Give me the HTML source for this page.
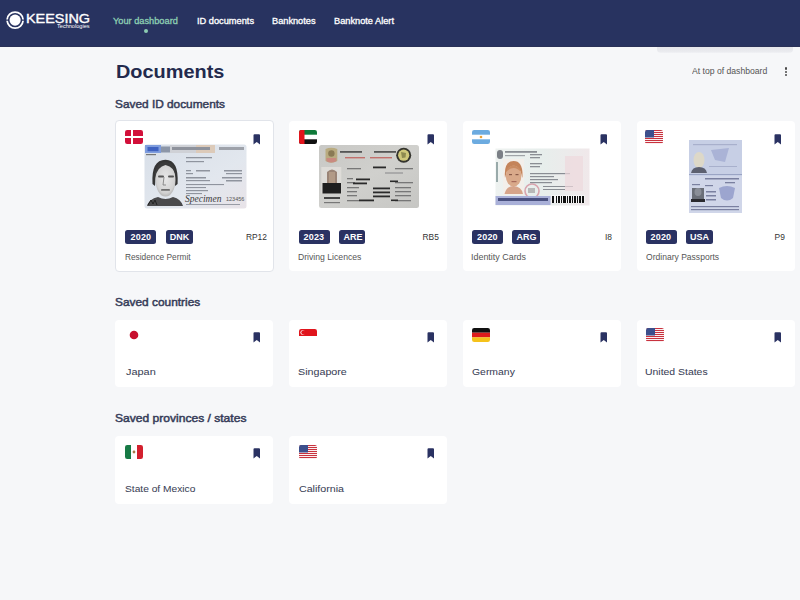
<!DOCTYPE html>
<html><head><meta charset="utf-8"><style>
html,body{margin:0;padding:0;}
body{width:800px;height:600px;overflow:hidden;background:#f6f7f9;position:relative;font-family:"Liberation Sans",sans-serif;}
.t{position:absolute;white-space:nowrap;font-family:"Liberation Sans",sans-serif;}
.a{position:absolute;display:block;}
.hdr{position:absolute;left:0;top:0;width:800px;height:46px;background:#283360;border-bottom:1px solid #2a3157;}
.strip{position:absolute;left:657px;top:47px;width:136px;height:6px;background:linear-gradient(#e6e7ec,#e9eaee 70%,#f1f2f5);border-radius:0 0 4px 4px;}
.card{position:absolute;background:#fff;border-radius:4px;}
.badge{position:absolute;top:230px;height:14px;background:#2a3262;border-radius:2.5px;}
.dot{position:absolute;width:2.2px;height:2.2px;border-radius:50%;background:#4a4a4a;}
</style></head><body>
<div class="hdr"></div>
<div class="strip"></div>
<svg class="a" style="left:5px;top:10px" width="21" height="21" viewBox="0 0 21 21">
<path d="M1.228 9.400 A8.9 8.9 0 0 1 18.972 9.400 L17.216 9.400 A7.15 7.15 0 0 0 2.984 9.400 Z" fill="#fff"/>
<path d="M1.228 10.800 A8.9 8.9 0 0 0 18.972 10.800 L17.216 10.800 A7.15 7.15 0 0 1 2.984 10.800 Z" fill="#fff"/>
<circle cx="10.1" cy="10.1" r="5.6" fill="#fff"/>
</svg>
<div class="a" style="left:144px;top:28.5px;width:4px;height:4px;border-radius:50%;background:#8ccdb2"></div>
<div class="dot" style="left:785px;top:67.4px"></div>
<div class="dot" style="left:785px;top:70.8px"></div>
<div class="dot" style="left:785px;top:74.1px"></div>
<div class="card" style="left:115px;top:120px;width:159px;height:152px;border:1px solid #e1e4ea;box-sizing:border-box"></div><div class="card" style="left:289px;top:121px;width:158px;height:150px"></div><div class="card" style="left:463px;top:121px;width:158px;height:150px"></div><div class="card" style="left:637px;top:121px;width:158px;height:150px"></div><div class="card" style="left:115px;top:320px;width:158px;height:67px"></div><div class="card" style="left:289px;top:320px;width:158px;height:67px"></div><div class="card" style="left:463px;top:320px;width:158px;height:67px"></div><div class="card" style="left:637px;top:320px;width:158px;height:67px"></div><div class="card" style="left:115px;top:436px;width:158px;height:68px"></div><div class="card" style="left:289px;top:436px;width:158px;height:68px"></div>
<div class="badge" style="left:125px;width:31px"></div><div class="badge" style="left:166px;width:27px"></div><div class="badge" style="left:299px;width:31px"></div><div class="badge" style="left:339px;width:26px"></div><div class="badge" style="left:472px;width:31px"></div><div class="badge" style="left:512px;width:28px"></div><div class="badge" style="left:645.5px;width:31px"></div><div class="badge" style="left:686px;width:27px"></div>
<svg class="a" style="left:125px;top:130px" width="18" height="14" viewBox="0 0 18 14"><defs><clipPath id="c125130"><rect width="18" height="14" rx="2.2"/></clipPath></defs><g clip-path="url(#c125130)"><rect width="18" height="14" fill="#d2103a"/><rect x="6" width="2" height="14" fill="#fff"/><rect y="6" width="18" height="2" fill="#fff"/></g></svg><svg class="a" style="left:298.5px;top:130px" width="18" height="14" viewBox="0 0 18 14"><defs><clipPath id="c298.5130"><rect width="18" height="14" rx="2.2"/></clipPath></defs><g clip-path="url(#c298.5130)"><rect width="18" height="14" fill="#fff"/><rect width="18" height="4.7" fill="#0f7a3a"/><rect y="9.3" width="18" height="4.7" fill="#111"/><rect width="5.5" height="14" fill="#e3141c"/></g></svg><svg class="a" style="left:471.5px;top:130px" width="18" height="14" viewBox="0 0 18 14"><defs><clipPath id="c471.5130"><rect width="18" height="14" rx="2.2"/></clipPath></defs><g clip-path="url(#c471.5130)"><rect width="18" height="14" fill="#fff"/><rect width="18" height="4.7" fill="#6cabe0"/><rect y="9.3" width="18" height="4.7" fill="#6cabe0"/><circle cx="9" cy="7" r="1.3" fill="#e8a33a"/></g></svg><svg class="a" style="left:645px;top:130px" width="18" height="14" viewBox="0 0 18 14"><defs><clipPath id="c645130"><rect width="18" height="14" rx="2.2"/></clipPath></defs><g clip-path="url(#c645130)"><rect width="18" height="14" fill="#fff"/><rect y="0" width="18" height="1.08" fill="#c8323e"/><rect y="2" width="18" height="1.08" fill="#c8323e"/><rect y="4" width="18" height="1.08" fill="#c8323e"/><rect y="6" width="18" height="1.08" fill="#c8323e"/><rect y="8" width="18" height="1.08" fill="#c8323e"/><rect y="10" width="18" height="1.08" fill="#c8323e"/><rect y="12" width="18" height="1.08" fill="#c8323e"/><rect width="9" height="7.5" fill="#3c4f8c"/></g></svg><svg class="a" style="left:125px;top:328px" width="18" height="14" viewBox="0 0 18 14"><defs><clipPath id="c125328"><rect width="18" height="14" rx="2.2"/></clipPath></defs><g clip-path="url(#c125328)"><rect width="18" height="14" fill="#fff"/><circle cx="9" cy="7" r="4.3" fill="#c8102e"/></g></svg><svg class="a" style="left:298.5px;top:329px" width="18" height="14" viewBox="0 0 18 14"><defs><clipPath id="c298.5329"><rect width="18" height="14" rx="2.2"/></clipPath></defs><g clip-path="url(#c298.5329)"><rect width="18" height="14" fill="#fff"/><rect width="18" height="7" fill="#e0141c"/><circle cx="3.6" cy="3.5" r="2.2" fill="#fff"/><circle cx="4.3" cy="3.5" r="2" fill="#e0141c"/></g></svg><svg class="a" style="left:472px;top:328px" width="18" height="14" viewBox="0 0 18 14"><defs><clipPath id="c472328"><rect width="18" height="14" rx="2.2"/></clipPath></defs><g clip-path="url(#c472328)"><rect width="18" height="4.7" fill="#111"/><rect y="4.7" width="18" height="4.7" fill="#dd1c1c"/><rect y="9.3" width="18" height="4.7" fill="#f5c21b"/></g></svg><svg class="a" style="left:645.5px;top:328px" width="18" height="14" viewBox="0 0 18 14"><defs><clipPath id="c645.5328"><rect width="18" height="14" rx="2.2"/></clipPath></defs><g clip-path="url(#c645.5328)"><rect width="18" height="14" fill="#fff"/><rect y="0" width="18" height="1.08" fill="#c8323e"/><rect y="2" width="18" height="1.08" fill="#c8323e"/><rect y="4" width="18" height="1.08" fill="#c8323e"/><rect y="6" width="18" height="1.08" fill="#c8323e"/><rect y="8" width="18" height="1.08" fill="#c8323e"/><rect y="10" width="18" height="1.08" fill="#c8323e"/><rect y="12" width="18" height="1.08" fill="#c8323e"/><rect width="9" height="7.5" fill="#3c4f8c"/></g></svg><svg class="a" style="left:125px;top:445px" width="18" height="14" viewBox="0 0 18 14"><defs><clipPath id="c125445"><rect width="18" height="14" rx="2.2"/></clipPath></defs><g clip-path="url(#c125445)"><rect width="18" height="14" fill="#fff"/><rect width="6" height="14" fill="#177a45"/><rect x="12" width="6" height="14" fill="#d3202e"/><circle cx="9" cy="7" r="1.4" fill="#a77b4a"/></g></svg><svg class="a" style="left:298.5px;top:445px" width="18" height="14" viewBox="0 0 18 14"><defs><clipPath id="c298.5445"><rect width="18" height="14" rx="2.2"/></clipPath></defs><g clip-path="url(#c298.5445)"><rect width="18" height="14" fill="#fff"/><rect y="0" width="18" height="1.08" fill="#c8323e"/><rect y="2" width="18" height="1.08" fill="#c8323e"/><rect y="4" width="18" height="1.08" fill="#c8323e"/><rect y="6" width="18" height="1.08" fill="#c8323e"/><rect y="8" width="18" height="1.08" fill="#c8323e"/><rect y="10" width="18" height="1.08" fill="#c8323e"/><rect y="12" width="18" height="1.08" fill="#c8323e"/><rect width="9" height="7.5" fill="#3c4f8c"/></g></svg>
<svg class="a" style="left:253px;top:133.6px" width="8" height="11" viewBox="0 0 8 11"><path d="M0.5 1.3 Q0.5 0.3 1.5 0.3 H6 Q7 0.3 7 1.3 V10.4 L3.75 8 L0.5 10.4 Z" fill="#2a3262"/></svg><svg class="a" style="left:253px;top:332px" width="8" height="11" viewBox="0 0 8 11"><path d="M0.5 1.3 Q0.5 0.3 1.5 0.3 H6 Q7 0.3 7 1.3 V10.4 L3.75 8 L0.5 10.4 Z" fill="#2a3262"/></svg><svg class="a" style="left:426.7px;top:133.6px" width="8" height="11" viewBox="0 0 8 11"><path d="M0.5 1.3 Q0.5 0.3 1.5 0.3 H6 Q7 0.3 7 1.3 V10.4 L3.75 8 L0.5 10.4 Z" fill="#2a3262"/></svg><svg class="a" style="left:426.7px;top:332px" width="8" height="11" viewBox="0 0 8 11"><path d="M0.5 1.3 Q0.5 0.3 1.5 0.3 H6 Q7 0.3 7 1.3 V10.4 L3.75 8 L0.5 10.4 Z" fill="#2a3262"/></svg><svg class="a" style="left:600px;top:133.6px" width="8" height="11" viewBox="0 0 8 11"><path d="M0.5 1.3 Q0.5 0.3 1.5 0.3 H6 Q7 0.3 7 1.3 V10.4 L3.75 8 L0.5 10.4 Z" fill="#2a3262"/></svg><svg class="a" style="left:600px;top:332px" width="8" height="11" viewBox="0 0 8 11"><path d="M0.5 1.3 Q0.5 0.3 1.5 0.3 H6 Q7 0.3 7 1.3 V10.4 L3.75 8 L0.5 10.4 Z" fill="#2a3262"/></svg><svg class="a" style="left:773.9px;top:133.6px" width="8" height="11" viewBox="0 0 8 11"><path d="M0.5 1.3 Q0.5 0.3 1.5 0.3 H6 Q7 0.3 7 1.3 V10.4 L3.75 8 L0.5 10.4 Z" fill="#2a3262"/></svg><svg class="a" style="left:773.9px;top:332px" width="8" height="11" viewBox="0 0 8 11"><path d="M0.5 1.3 Q0.5 0.3 1.5 0.3 H6 Q7 0.3 7 1.3 V10.4 L3.75 8 L0.5 10.4 Z" fill="#2a3262"/></svg><svg class="a" style="left:253px;top:448.4px" width="8" height="11" viewBox="0 0 8 11"><path d="M0.5 1.3 Q0.5 0.3 1.5 0.3 H6 Q7 0.3 7 1.3 V10.4 L3.75 8 L0.5 10.4 Z" fill="#2a3262"/></svg><svg class="a" style="left:426.7px;top:448.4px" width="8" height="11" viewBox="0 0 8 11"><path d="M0.5 1.3 Q0.5 0.3 1.5 0.3 H6 Q7 0.3 7 1.3 V10.4 L3.75 8 L0.5 10.4 Z" fill="#2a3262"/></svg>
<svg class="a" style="left:144px;top:144px" width="103" height="65" viewBox="0 0 103 65">
<defs><linearGradient id="gd" x1="0" y1="0" x2="1" y2="1"><stop offset="0" stop-color="#d8dfe8"/><stop offset="0.6" stop-color="#e2e7ee"/><stop offset="1" stop-color="#e8e3e8"/></linearGradient>
<radialGradient id="fc" cx="0.5" cy="0.45" r="0.6"><stop offset="0" stop-color="#e8e8e8"/><stop offset="0.75" stop-color="#d2d2d2"/><stop offset="1" stop-color="#a8a8a8"/></radialGradient></defs>
<rect x="0.5" y="0.5" width="102" height="64" rx="2.5" fill="url(#gd)"/>
<rect x="1" y="1" width="16" height="8" fill="#7f9ddd"/>
<rect x="3.5" y="3" width="11" height="4.2" fill="#3f62c0"/>
<rect x="17" y="2.5" width="9" height="6" fill="#8c96a8"/>
<rect x="26" y="1" width="45" height="8" fill="#cfd1d6"/>
<rect x="52" y="1" width="19" height="8" fill="#dccab9"/>
<rect x="28" y="3" width="38" height="3" fill="#8e929c"/>
<rect x="75" y="3" width="25" height="3" fill="#9ea2aa"/>
<rect x="2" y="10" width="10" height="1.2" fill="#777"/>
<path d="M8.5 40 Q7 15.7 21.5 15.7 Q35 15.7 33.6 40 L31 42 L30 26 Q26 19 21.5 19.5 Q16 19.5 12 27 L11 42 Z" fill="#353535"/>
<ellipse cx="21.5" cy="36" rx="10" ry="16.5" fill="url(#fc)"/>
<path d="M11 34 Q11 18 21.5 18 Q32 18 32 34 Q30.5 22.5 21.5 21 Q13.5 22.5 11 34 Z" fill="#3b3b3b"/>
<rect x="14" y="31.5" width="6" height="2" rx="1" fill="#555"/><rect x="24" y="31.5" width="6" height="2" rx="1" fill="#555"/>
<path d="M20 33 L19 41 L22 41" fill="none" stroke="#777" stroke-width="0.8"/>
<rect x="17" y="45" width="9" height="1.8" rx="0.9" fill="#6d6d6d"/>
<path d="M3 62 Q5 55 14 53 Q21.5 57 29 53 Q37 55 39 62 Z" fill="#4a4a4c"/><path d="M4 61 L7 56 L9 60 L11 56 L13 61" fill="none" stroke="#222" stroke-width="1"/>
<g fill="#8f949e">
<rect x="42" y="13" width="26" height="1.3"/><rect x="42" y="17" width="18" height="1.2"/>
<rect x="42" y="26" width="5" height="1.3"/><rect x="52" y="26" width="14" height="1.5"/><rect x="80" y="26" width="18" height="1.5"/>
<rect x="42" y="29" width="7" height="1.2"/><rect x="82" y="29" width="16" height="1.2"/>
<rect x="42" y="33" width="20" height="1.5"/><rect x="78" y="33" width="20" height="1.5"/>
<rect x="42" y="36" width="24" height="1.2"/><rect x="82" y="36" width="16" height="1.5"/>
<rect x="42" y="40" width="38" height="1.1"/><rect x="42" y="43" width="20" height="1.1"/>
<rect x="42" y="46" width="22" height="1.2"/><rect x="42" y="49" width="16" height="1.1"/>
<rect x="42" y="60" width="54" height="0.9"/>
</g>
<text x="41" y="57.5" font-family="Liberation Serif" font-style="italic" font-size="9.5" fill="#3a3a3a">Specimen</text>
<text x="82" y="57" font-family="Liberation Sans" font-size="5.5" fill="#555">123456</text>
</svg>
<svg class="a" style="left:319px;top:145px" width="100" height="63" viewBox="0 0 100 63">
<defs><linearGradient id="gu" x1="0" y1="0" x2="1" y2="1"><stop offset="0" stop-color="#c8c8c5"/><stop offset="0.5" stop-color="#d0d0cd"/><stop offset="1" stop-color="#c6c6c3"/></linearGradient></defs><rect x="0" y="0" width="100" height="63" rx="2.5" fill="url(#gu)"/>
<path d="M6.5 4 Q12 1.5 18.3 4 L18.3 16 Q12 19.5 6.5 16 Z" fill="#b9ab80"/>
<path d="M7.5 13 L17.3 13 L17.3 16.3 Q12 18.8 7.5 16.3 Z" fill="#c98a80"/>
<circle cx="12.4" cy="8.5" r="3.2" fill="#8a7a55"/>
<circle cx="84.7" cy="10.2" r="7.5" fill="#34342e"/>
<circle cx="84.7" cy="10.2" r="5.6" fill="#cfc77a"/>
<path d="M82 7 L87 8 L86.5 12.5 L83 13 Z" fill="#8e8a50"/>
<rect x="21" y="6" width="22" height="1.8" fill="#555"/><rect x="55" y="6" width="22" height="1.8" fill="#555"/>
<rect x="26" y="12" width="20" height="1.4" fill="#c2706c"/><rect x="51" y="12" width="22" height="1.4" fill="#c2706c"/>
<rect x="2.3" y="22" width="20" height="26.5" fill="#dedcd8"/>
<path d="M8 40 L8 27 Q13 22 18 27 L18 40 Z" fill="#9a8476"/>
<rect x="10" y="27" width="6" height="12" fill="#b29a86"/>
<rect x="3.5" y="38" width="18.5" height="10.5" fill="#1f1f1f"/>
<rect x="5" y="52" width="16" height="2" fill="#444"/><rect x="5" y="57" width="16" height="1.2" fill="#777"/>
<g fill="#777">
<rect x="28" y="23" width="14" height="1.3"/><rect x="76" y="23" width="18" height="1.3"/>
<rect x="28" y="33" width="6" height="1.3"/><rect x="28" y="37" width="8" height="1.3"/>
<rect x="28" y="42" width="12" height="1.3"/><rect x="28" y="46" width="10" height="1.3"/><rect x="28" y="50" width="10" height="1.3"/>
<rect x="28" y="55" width="12" height="1.3"/><rect x="76" y="37" width="18" height="1.3"/><rect x="76" y="42" width="16" height="1.3"/>
<rect x="76" y="46" width="16" height="1.3"/><rect x="76" y="50" width="16" height="1.3"/><rect x="76" y="55" width="16" height="1.3"/>
<rect x="66" y="27" width="18" height="2" fill="#aaa"/>
</g>
<g fill="#2a2a2a">
<rect x="54" y="21.5" width="13" height="1.8"/><rect x="37" y="33.5" width="14" height="1.8"/><rect x="34" y="37.5" width="14" height="1.8"/>
<rect x="54" y="42.5" width="17" height="1.8"/><rect x="54" y="46.5" width="17" height="1.8"/><rect x="54" y="50.5" width="17" height="1.8"/>
<rect x="40" y="54.5" width="15" height="1.8"/><rect x="71" y="35.5" width="8" height="1.6"/><rect x="72" y="54.5" width="7" height="1.6"/>
</g>
</svg>
<svg class="a" style="left:495px;top:148px" width="95" height="58" viewBox="0 0 95 58">
<defs><linearGradient id="ga" x1="0" y1="0" x2="1" y2="0"><stop offset="0" stop-color="#eef2f0"/><stop offset="0.5" stop-color="#e7eeec"/><stop offset="1" stop-color="#f0e8ea"/></linearGradient></defs>
<rect x="0.5" y="0.5" width="94" height="57" fill="url(#ga)"/>
<rect x="2" y="2" width="6" height="9" rx="3" fill="#7b7f86"/>
<rect x="10" y="3" width="32" height="1.8" fill="#8a8e94"/><rect x="10" y="7" width="20" height="1.2" fill="#a0a4a8"/>
<rect x="1" y="14" width="2" height="20" fill="#9aa"/>
<rect x="8" y="11" width="21" height="36" fill="#f3efea"/>
<path d="M10 30 Q8.5 13 18.6 13 Q28.5 13 27.4 30 L25.5 23 Q19 17 12 23 Z" fill="#c4845a"/>
<ellipse cx="18.6" cy="28" rx="7.8" ry="10.5" fill="#d9a98a"/>
<path d="M11 24 Q18.6 16 26 24 Q24 18 18.6 17.5 Q13 18 11 24Z" fill="#c98c62"/>
<rect x="14" y="26" width="3" height="1.2" fill="#8a5a48"/><rect x="20.5" y="26" width="3" height="1.2" fill="#8a5a48"/>
<rect x="16.5" y="33" width="5" height="1.2" fill="#a76a5a"/>
<path d="M9.5 46 Q11 38.5 18.6 38 Q26.5 38.5 28 46 Z" fill="#d6a48a"/>
<circle cx="37" cy="43" r="7" fill="none" stroke="#d9a3ad" stroke-width="1.6"/>
<rect x="33" y="40" width="7" height="5" fill="#b8b8b8"/>
<g fill="#8a8e94">
<rect x="35" y="6" width="12" height="1.3"/><rect x="35" y="9" width="10" height="1.3"/>
<rect x="35" y="15" width="12" height="1.3"/><rect x="35" y="18" width="10" height="1.3"/>
<rect x="35" y="25" width="40" height="1.2"/><rect x="35" y="28" width="24" height="1.2"/>
<rect x="35" y="31" width="28" height="1.2"/><rect x="35" y="34" width="22" height="1.2"/>
<rect x="48" y="38" width="30" height="1"/><rect x="48" y="41" width="22" height="1"/>
</g>
<rect x="70" y="8" width="18" height="35" fill="#eed9dd" opacity="0.7"/>
<rect x="0.5" y="48" width="55" height="9" fill="#a9b0d8"/>
<rect x="3" y="50" width="50" height="3" fill="#4a5180"/>
<rect x="56" y="47" width="34" height="8" fill="#f4f4f4"/>
<g fill="#111"><rect x="57" y="48" width="2" height="7"/><rect x="61" y="48" width="1" height="7"/><rect x="63" y="48" width="2" height="7"/><rect x="66" y="48" width="1" height="7"/><rect x="68" y="48" width="3" height="7"/><rect x="72" y="48" width="1" height="7"/><rect x="74" y="48" width="2" height="7"/><rect x="77" y="48" width="1" height="7"/><rect x="79" y="48" width="2" height="7"/><rect x="82" y="48" width="1" height="7"/><rect x="84" y="48" width="2" height="7"/><rect x="87" y="48" width="2" height="7"/></g>
</svg>
<svg class="a" style="left:689px;top:140px" width="53" height="73" viewBox="0 0 53 73">
<rect x="0" y="0" width="53" height="73" fill="#c7cfe5"/>
<rect x="0" y="36" width="53" height="37" fill="#d0d6e9"/>
<rect x="0" y="34" width="53" height="1" fill="#9aa4c4"/>
<ellipse cx="10" cy="20" rx="5.5" ry="8" fill="#ddd8c8"/>
<path d="M2 33 Q3 27 10 27 Q17 27 18 33 Z" fill="#5c6070"/>
<path d="M22 10 L40 8 L36 22 L26 20 Z" fill="#aab3d6"/>
<g fill="#a8b0cc"><rect x="20" y="26" width="28" height="1"/><rect x="4" y="4" width="44" height="1.2"/></g>
<rect x="3" y="48" width="12" height="14" fill="#6a6e78"/>
<ellipse cx="9" cy="52" rx="3.5" ry="4" fill="#8a8e98"/>
<rect x="2" y="59" width="14" height="3" fill="#2a2a30"/>
<g fill="#7a80a0"><rect x="16" y="38" width="34" height="1.5"/><rect x="3" y="44" width="8" height="1.2"/><rect x="16" y="45" width="8" height="1.2"/><rect x="36" y="42" width="10" height="1.3"/>
<rect x="17" y="51" width="10" height="1.5"/><rect x="17" y="55" width="10" height="1.5"/><rect x="17" y="59" width="10" height="1.5"/><rect x="2" y="66" width="48" height="1.2"/><rect x="2" y="69" width="48" height="1.2"/></g>
<path d="M30 48 Q38 44 46 48 L44 58 Q38 63 32 58 Z" fill="#8e98c8" opacity="0.8"/>
</svg>
<div class="t" id="nav1" style="left:113.20px;top:17.03px;font-size:8.55px;line-height:8.55px;font-weight:400;color:#8ccdb2;transform:scaleX(1.0800);transform-origin:0 0;-webkit-text-stroke:0.3px #8ccdb2">Your dashboard</div>
<div class="t" id="nav2" style="left:197.42px;top:17.03px;font-size:8.55px;line-height:8.55px;font-weight:400;color:#ffffff;transform:scaleX(1.0817);transform-origin:0 0;-webkit-text-stroke:0.3px #ffffff">ID documents</div>
<div class="t" id="nav3" style="left:272.42px;top:17.03px;font-size:8.55px;line-height:8.55px;font-weight:400;color:#ffffff;transform:scaleX(1.0769);transform-origin:0 0;-webkit-text-stroke:0.3px #ffffff">Banknotes</div>
<div class="t" id="nav4" style="left:334.32px;top:17.03px;font-size:8.55px;line-height:8.55px;font-weight:400;color:#ffffff;transform:scaleX(1.0791);transform-origin:0 0;-webkit-text-stroke:0.3px #ffffff">Banknote Alert</div>
<div class="t" id="logo" style="left:26.29px;top:14.29px;font-size:11.96px;line-height:11.96px;font-weight:400;color:#ffffff;transform:scaleX(1.2059);transform-origin:0 0;-webkit-text-stroke:0.35px #ffffff">KEESING</div>
<div class="t" id="logo2" style="left:57.19px;top:24.81px;font-size:4.93px;line-height:4.93px;font-weight:400;color:#ffffff;transform:scaleX(1.1360);transform-origin:0 0">Technologies</div>
<div class="t" id="title" style="left:115.83px;top:62.93px;font-size:18.55px;line-height:18.55px;font-weight:700;color:#232a4d;transform:scaleX(1.0737);transform-origin:0 0">Documents</div>
<div class="t" id="attop" style="left:692.00px;top:67.12px;font-size:9.28px;line-height:9.28px;font-weight:400;color:#555555;transform:scaleX(0.9309);transform-origin:0 0">At top of dashboard</div>
<div class="t" id="h1" style="left:114.91px;top:98.76px;font-size:10.87px;line-height:10.87px;font-weight:400;color:#353b58;transform:scaleX(1.0909);transform-origin:0 0;-webkit-text-stroke:0.45px #353b58">Saved ID documents</div>
<div class="t" id="h2" style="left:114.89px;top:297.08px;font-size:10.72px;line-height:10.72px;font-weight:400;color:#353b58;transform:scaleX(1.1086);transform-origin:0 0;-webkit-text-stroke:0.45px #353b58">Saved countries</div>
<div class="t" id="h3" style="left:114.86px;top:412.81px;font-size:10.58px;line-height:10.58px;font-weight:400;color:#353b58;transform:scaleX(1.1404);transform-origin:0 0;-webkit-text-stroke:0.45px #353b58">Saved provinces / states</div>
<div class="t" id="b1y" style="left:130.50px;top:233.16px;font-size:8.99px;line-height:8.99px;font-weight:700;color:#ffffff;letter-spacing:0.200px">2020</div>
<div class="t" id="b1c" style="left:169.80px;top:233.16px;font-size:8.99px;line-height:8.99px;font-weight:700;color:#ffffff;letter-spacing:0.000px">DNK</div>
<div class="t" id="b2y" style="left:303.50px;top:233.16px;font-size:8.99px;line-height:8.99px;font-weight:700;color:#ffffff;letter-spacing:0.200px">2023</div>
<div class="t" id="b2c" style="left:343.50px;top:233.16px;font-size:8.99px;line-height:8.99px;font-weight:700;color:#ffffff;letter-spacing:0.000px">ARE</div>
<div class="t" id="b3y" style="left:477.00px;top:233.16px;font-size:8.99px;line-height:8.99px;font-weight:700;color:#ffffff;letter-spacing:0.200px">2020</div>
<div class="t" id="b3c" style="left:516.50px;top:233.16px;font-size:8.99px;line-height:8.99px;font-weight:700;color:#ffffff;letter-spacing:0.000px">ARG</div>
<div class="t" id="b4y" style="left:650.50px;top:233.16px;font-size:8.99px;line-height:8.99px;font-weight:700;color:#ffffff;letter-spacing:0.200px">2020</div>
<div class="t" id="b4c" style="left:690.00px;top:233.16px;font-size:8.99px;line-height:8.99px;font-weight:700;color:#ffffff;letter-spacing:0.000px">USA</div>
<div class="t" id="c1" style="left:245.90px;top:232.66px;font-size:8.41px;line-height:8.41px;font-weight:400;color:#333333;letter-spacing:0.000px">RP12</div>
<div class="t" id="c2" style="left:422.50px;top:232.66px;font-size:8.41px;line-height:8.41px;font-weight:400;color:#333333;letter-spacing:0.000px">RB5</div>
<div class="t" id="c3" style="left:604.90px;top:232.66px;font-size:8.41px;line-height:8.41px;font-weight:400;color:#333333;letter-spacing:0.000px">I8</div>
<div class="t" id="c4" style="left:774.60px;top:232.66px;font-size:8.41px;line-height:8.41px;font-weight:400;color:#333333;letter-spacing:0.000px">P9</div>
<div class="t" id="l1" style="left:125.24px;top:253.01px;font-size:8.70px;line-height:8.70px;font-weight:400;color:#555555;transform:scaleX(0.9559);transform-origin:0 0">Residence Permit</div>
<div class="t" id="l2" style="left:297.80px;top:253.01px;font-size:8.70px;line-height:8.70px;font-weight:400;color:#555555;transform:scaleX(0.9952);transform-origin:0 0">Driving Licences</div>
<div class="t" id="l3" style="left:471.37px;top:253.01px;font-size:8.70px;line-height:8.70px;font-weight:400;color:#555555;transform:scaleX(1.0269);transform-origin:0 0">Identity Cards</div>
<div class="t" id="l4" style="left:646.00px;top:253.01px;font-size:8.70px;line-height:8.70px;font-weight:400;color:#555555;transform:scaleX(0.9838);transform-origin:0 0">Ordinary Passports</div>
<div class="t" id="n1" style="left:126.00px;top:366.99px;font-size:9.42px;line-height:9.42px;font-weight:400;color:#3b3f57;transform:scaleX(1.1600);transform-origin:0 0;-webkit-text-stroke:0.05px #3b3f57">Japan</div>
<div class="t" id="n2" style="left:297.66px;top:366.99px;font-size:9.42px;line-height:9.42px;font-weight:400;color:#3b3f57;transform:scaleX(1.1381);transform-origin:0 0;-webkit-text-stroke:0.05px #3b3f57">Singapore</div>
<div class="t" id="n3" style="left:472.40px;top:366.99px;font-size:9.42px;line-height:9.42px;font-weight:400;color:#3b3f57;transform:scaleX(1.1077);transform-origin:0 0;-webkit-text-stroke:0.05px #3b3f57">Germany</div>
<div class="t" id="n4" style="left:644.89px;top:366.99px;font-size:9.42px;line-height:9.42px;font-weight:400;color:#3b3f57;transform:scaleX(1.1091);transform-origin:0 0;-webkit-text-stroke:0.05px #3b3f57">United States</div>
<div class="t" id="p1" style="left:124.72px;top:483.99px;font-size:9.42px;line-height:9.42px;font-weight:400;color:#3b3f57;transform:scaleX(1.0844);transform-origin:0 0;-webkit-text-stroke:0.05px #3b3f57">State of Mexico</div>
<div class="t" id="p2" style="left:298.80px;top:483.99px;font-size:9.42px;line-height:9.42px;font-weight:400;color:#3b3f57;transform:scaleX(1.1325);transform-origin:0 0;-webkit-text-stroke:0.05px #3b3f57">California</div>
</body></html>
